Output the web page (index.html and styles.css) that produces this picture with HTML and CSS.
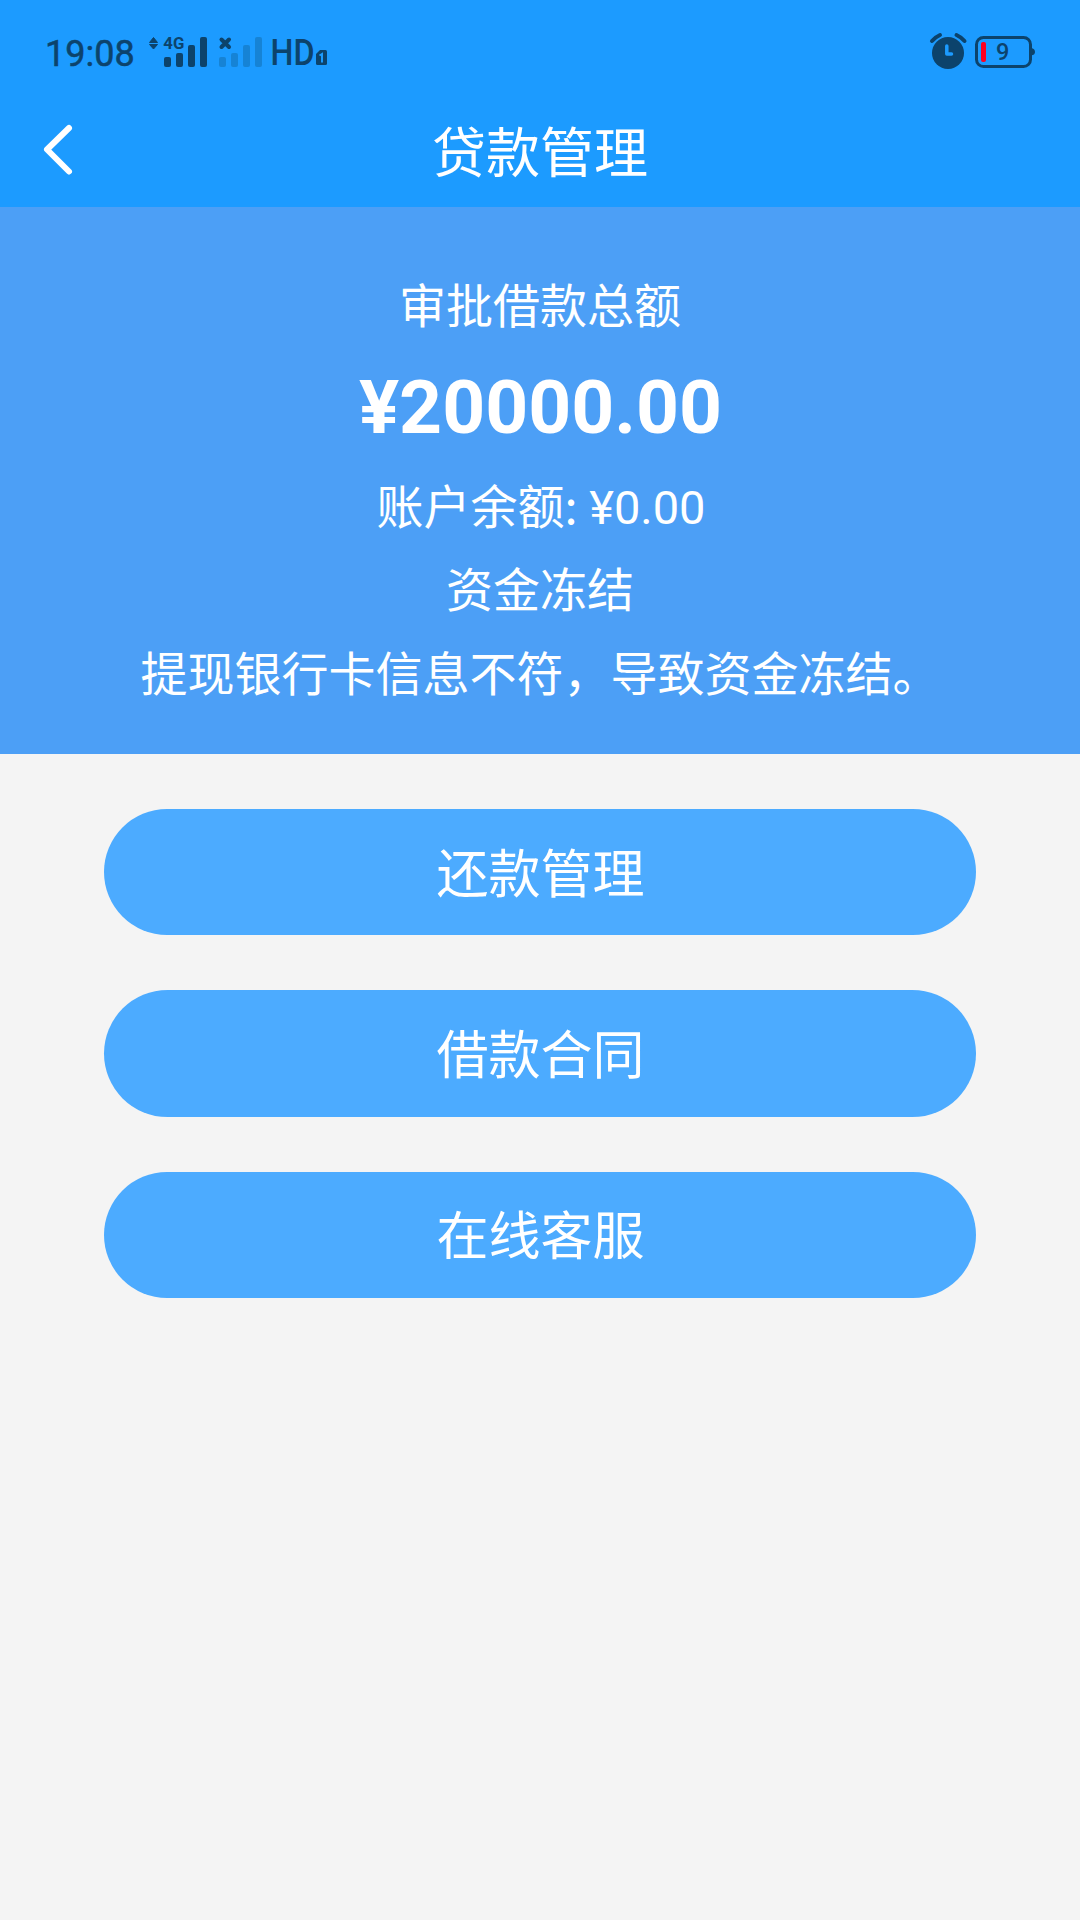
FILE: index.html
```html
<!DOCTYPE html>
<html lang="zh-CN">
<head>
<meta charset="utf-8">
<title>贷款管理</title>
<link rel="stylesheet" href="styles.css">
</head>
<body>
<header class="header">
  <div class="status">
    <span class="clock">19:08</span>
    <svg class="signals" viewBox="146 28 186 46" width="186" height="46">
      <g fill="#0c436c">
        <path d="M153.500 37.500 L157.500 42.500 H149.500 Z M149.500 44.500 H157.500 L153.500 49 Z" stroke="#0c436c" stroke-linejoin="round"/>
        <text x="163.300" y="49" font-size="17" font-weight="700" textLength="21" lengthAdjust="spacingAndGlyphs">4G</text>
        <rect x="164" y="57" width="7" height="10" rx="2"/>
        <rect x="176" y="53" width="7" height="14" rx="2"/>
        <rect x="188" y="45" width="7" height="22" rx="2"/>
        <rect x="200" y="37" width="7" height="30" rx="2"/>
      </g>
      <path d="M221.500 39.500 L229 47 M229 39.500 L221.500 47" stroke="#0c436c" stroke-width="4" stroke-linecap="round"/>
      <g fill="#1683d5">
        <rect x="219" y="57" width="7" height="10" rx="2"/>
        <rect x="231" y="53" width="7" height="14" rx="2"/>
        <rect x="243" y="45" width="7" height="22" rx="2"/>
        <rect x="255" y="37" width="7" height="30" rx="2"/>
      </g>
      <g fill="#0c436c">
        <text x="270.500" y="65" font-size="36" font-weight="500" textLength="44" lengthAdjust="spacingAndGlyphs">HD</text>
        <path d="M320 50 H325.500 Q327 50 327 51.500 V63.500 Q327 65 325.500 65 H317.500 Q316 65 316 63.500 V54 Z"/>
      </g>
      <path d="M319.500 55.500 L322 54 V62.500" fill="none" stroke="#1c9bff" stroke-width="2"/>
    </svg>
    <svg class="power" viewBox="928 28 110 46" width="110" height="46">
      <circle cx="948" cy="53" r="16" fill="#0c436c"/>
      <path d="M932 41 Q935.500 37 940 35 M956.500 35 Q961 37 964.500 41" fill="none" stroke="#0c436c" stroke-width="4" stroke-linecap="round"/>
      <path d="M946.800 46 V54 H951.500" fill="none" stroke="#1c9bff" stroke-width="3.500" stroke-linecap="round" stroke-linejoin="round"/>
      <rect x="976.500" y="37.500" width="54" height="29" rx="7" fill="none" stroke="#0c436c" stroke-width="3"/>
      <path d="M1031 48 Q1035 48.500 1035 52 Q1035 55 1031 55.500 Z" fill="#0c436c"/>
      <rect x="981" y="42" width="5" height="20" rx="2" fill="#ff0021"/>
      <text x="996" y="59.700" font-size="23.500" font-weight="500" fill="#0c436c">9</text>
    </svg>
  </div>
  <nav class="nav">
    <svg class="back" viewBox="0 0 34 54" width="34" height="54">
      <path d="M28 5 L6 26.500 L28 48.500" fill="none" stroke="#fff" stroke-width="6" stroke-linecap="round" stroke-linejoin="round"/>
    </svg>
    <h1 class="title">贷款管理</h1>
  </nav>
</header>
<section class="summary">
  <p class="line">审批借款总额</p>
  <p class="amount">¥20000.00</p>
  <p class="line balance">账户余额<span class="colon">:</span> ¥0.00</p>
  <p class="line">资金冻结</p>
  <p class="line">提现银行卡信息不符，导致资金冻结。</p>
</section>
<main class="actions">
  <button class="action">还款管理</button>
  <button class="action">借款合同</button>
  <button class="action">在线客服</button>
</main>
</body>
</html>
```
FILE: styles.css
```css
* {
  box-sizing: border-box;
}

body {
  margin: 0;
  min-height: 1920px;
  background: #f4f4f4;
  color: #fff;
  font-family: Roboto, "Noto Sans CJK SC", sans-serif;
}

.header {
  height: 207px;
  background: #1c9bff;
}

.status {
  display: flex;
  height: 96px;
  padding: 28px 42px 0 45px;
  color: #0c436c;
}

.clock {
  width: 101px;
  font-size: 36px;
  line-height: 52px;
  white-space: nowrap;
  -webkit-text-stroke: 0.5px #0c436c;
}

.signals,
.power {
  display: block;
  flex: none;
}

.power {
  margin-left: auto;
}

.nav {
  display: grid;
  grid-template-columns: 110px 1fr 110px;
  align-items: center;
  height: 111px;
}

.back {
  display: block;
  margin: -3px 0 0 41px;
}

.title {
  margin: 0;
  padding-top: 6px;
  font-size: 54px;
  font-weight: 400;
  line-height: 80px;
  text-align: center;
}

.summary {
  height: 547px;
  padding-top: 58px;
  background: #4c9ff6;
  text-align: center;
}

.line {
  height: 83.5px;
  margin: 0;
  font-size: 47px;
  line-height: 83.5px;
}

.balance {
  padding-left: 2px;
}

.colon {
  font-family: "Noto Sans CJK SC", sans-serif;
  line-height: 1;
}

.amount {
  margin: 0;
  padding-left: 1px;
  font-size: 75px;
  font-weight: 700;
  line-height: 117px;
}

.actions {
  display: flex;
  flex-direction: column;
  gap: 55px;
  padding: 55px 104px;
}

.action {
  height: 126.3px;
  padding: 0 0 4px 1px;
  border: 0;
  border-radius: 64px;
  background: #4cabff;
  color: #fff;
  font: inherit;
  font-size: 52px;
}
```
